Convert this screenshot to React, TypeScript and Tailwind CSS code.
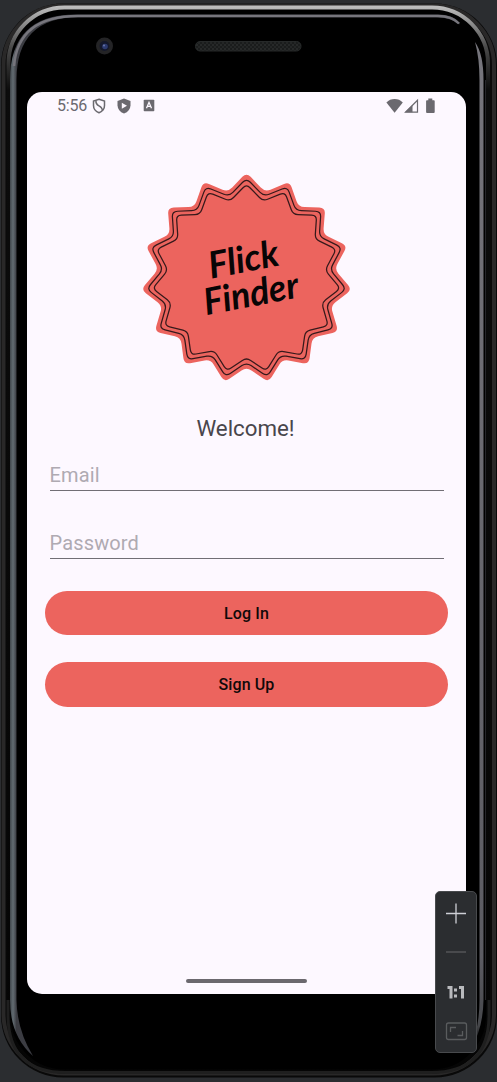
import React from "react";

function burst(tip: number, valley: number, cut: number): string {
  const points: [number, number][] = [];
  for (let i = 0; i < 30; i++) {
    const r = i % 2 === 0 ? tip : valley;
    const a = (i * 12 * Math.PI) / 180;
    points.push([r * Math.sin(a), -r * Math.cos(a)]);
  }
  const toward = (a: [number, number], b: [number, number]) => {
    const d = Math.hypot(b[0] - a[0], b[1] - a[1]);
    return `${(a[0] + ((b[0] - a[0]) * cut) / d).toFixed(2)} ${(a[1] + ((b[1] - a[1]) * cut) / d).toFixed(2)}`;
  };
  return (
    points
      .map((p, i) => {
        const prev = points[(i + 29) % 30];
        const next = points[(i + 1) % 30];
        return `${i === 0 ? "M" : "L"}${toward(p, prev)} Q${p[0].toFixed(2)} ${p[1].toFixed(2)} ${toward(p, next)}`;
      })
      .join(" ") + "Z"
  );
}

function DeviceFrame() {
  return (
    <svg className="absolute inset-0" width="497" height="1082" viewBox="0 0 497 1082" fill="none" aria-hidden="true">
      <defs>
        <linearGradient id="rim" x1="0" y1="4" x2="0" y2="1078" gradientUnits="userSpaceOnUse">
          <stop offset="0" stopColor="#c4c4c4" />
          <stop offset="0.012" stopColor="#a0a0a0" />
          <stop offset="0.04" stopColor="#4a4a4a" />
          <stop offset="0.08" stopColor="#0c0c0c" />
          <stop offset="1" stopColor="#050505" />
        </linearGradient>
        <linearGradient id="glass" x1="0" y1="14" x2="0" y2="1062" gradientUnits="userSpaceOnUse">
          <stop offset="0" stopColor="#77767d" />
          <stop offset="0.9" stopColor="#5c5c63" />
          <stop offset="0.965" stopColor="#45464a" />
          <stop offset="0.985" stopColor="#000" />
        </linearGradient>
        <linearGradient id="leftGlass" x1="9.500" y1="0" x2="16.500" y2="0" gradientUnits="userSpaceOnUse">
          <stop offset="0" stopColor="#3a4045" />
          <stop offset="0.5" stopColor="#626b71" />
          <stop offset="1" stopColor="#3b3c42" />
        </linearGradient>
        <pattern id="mesh" width="4" height="4" patternUnits="userSpaceOnUse">
          <rect width="4" height="4" fill="#1a1c1c" />
          <circle cx="1" cy="1" r="0.8" fill="#363939" />
          <circle cx="3" cy="3" r="0.8" fill="#303333" />
        </pattern>
      </defs>
      <rect x="1" y="3.500" width="496" height="1074" rx="62" fill="#090909" />
      <rect x="3.500" y="5.500" width="490.500" height="1068" rx="60" stroke="#292828" strokeWidth="4" />
      <rect x="8.500" y="7.500" width="479.500" height="1064" rx="56" fill="#000" stroke="url(#rim)" strokeWidth="4" />
      <path d="M8 1000V1015Q8 1072.500 66 1072.500H431Q489 1072.500 489 1015V1000" stroke="#1f1f1f" strokeWidth="3" />
      <path
        d="M10 1000V80Q10 14.500 76 14.500H438Q456 15 460 24.500Q451 17.500 436 17.300H78Q16.500 17.500 16.500 80V1000Q17 1030 33 1056Q10 1036 10 1000Z"
        fill="url(#leftGlass)"
      />
      <path d="M14 66Q18 15.900 78 15.900H438Q452 16 459 23.500" stroke="url(#glass)" strokeWidth="2.500" />
      <path d="M475 42Q483.500 54 483.500 80V1000Q483 1030 470 1050Q479.500 1028 479.500 1000V80Q479.500 58 475 42Z" fill="url(#glass)" />
      <path d="M485.500 80V1000" stroke="#26262a" strokeWidth="1" />
      <circle cx="104.500" cy="46" r="8.500" fill="#242426" />
      <circle cx="104.500" cy="46" r="5" fill="#14182b" />
      <circle cx="105" cy="46.500" r="2.800" fill="#2c3a70" />
      <circle cx="104" cy="45.500" r="1" fill="#6876aa" />
      <rect x="195.500" y="41.500" width="105.500" height="9.500" rx="4.500" fill="url(#mesh)" stroke="#262929" />
    </svg>
  );
}

function StatusBar() {
  return (
    <div className="flex h-[27px] shrink-0 items-center pl-[30px] pr-[31px] text-[#6b696f]">
      <span className="w-[35px] text-[16px] leading-none tracking-[-0.2px]">5:56</span>
      <svg className="mr-[11px]" width="14" height="16" viewBox="0 0 14 16" fill="none" stroke="currentColor" strokeWidth="1.500">
        <path d="M7 1.200 12.500 3V7.500Q12.500 12.500 7 14.800Q1.500 12.500 1.500 7.500V3Z" />
        <path d="M4 2.500Q3.500 6 7 7.800T10.500 13" />
      </svg>
      <svg className="mr-[12px]" width="14" height="16" viewBox="0 0 14 16">
        <path d="M7 .5 13.500 3V7.500Q13.200 13.200 7 15.500Q.8 13.200 .5 7.500V3Z" fill="currentColor" />
        <path d="M4.800 4.800V10.800L10 7.800Z" fill="#fdf8ff" />
      </svg>
      <svg width="12" height="13" viewBox="0 0 12 13">
        <rect x=".7" y=".8" width="10.600" height="11.400" rx=".8" fill="currentColor" />
        <path d="M3.500 9.200 6 3.300 8.500 9.200M4.400 7.400H7.600" fill="none" stroke="#fdf8ff" strokeWidth="1.300" />
      </svg>
      <svg className="ml-auto" width="50" height="16" viewBox="0 0 50 16">
        <path d="M1.400 4.400Q4.800 1 9.600 1T17.800 4.400L9.600 14.700Z" fill="currentColor" />
        <path d="M32.500 2.300V14.200H20.500Z" fill="none" stroke="currentColor" strokeWidth="1.200" />
        <path d="M27.500 7V14.300H20Z" fill="currentColor" />
        <path d="M43.300 .6H47.300V2.200H48.800Q49.700 2.200 49.700 3.100V14Q49.700 15 48.800 15H42Q41.100 15 41.100 14V3.100Q41.100 2.200 42 2.200H43.300Z" fill="currentColor" />
      </svg>
    </div>
  );
}

function Logo() {
  return (
    <svg className="mx-auto mt-[54px] h-[210px] w-[210px] shrink-0" viewBox="-104.500 -105.500 210 210" role="img" aria-label="Flick Finder">
      <path d={burst(106, 88.5, 6)} fill="#ec645e" />
      <path d={burst(100.2, 84, 5.5)} fill="none" stroke="#36191b" strokeWidth="1.250" />
      <path d={burst(94.4, 79.1, 5)} fill="none" stroke="#36191b" strokeWidth="1.250" />
      <g className="font-['Lato'] text-[37px] font-bold italic" fill="#080506" transform="rotate(-11)">
        <text x="-35" y="-6.500" textLength="71" lengthAdjust="spacingAndGlyphs">Flick</text>
        <text x="-46.500" y="28.500" textLength="96" lengthAdjust="spacingAndGlyphs">Finder</text>
      </g>
    </svg>
  );
}

function Field({ label, type }: { label: string; type: string }) {
  return (
    <input
      type={type}
      placeholder={label}
      aria-label={label}
      className="mx-[22.5px] block h-[36px] rounded-none border-b border-[#716e75] bg-transparent pt-[4px] text-[20px] leading-[24px] tracking-[0.15px] text-[#49464c] outline-none placeholder:text-[#afaab2]"
    />
  );
}

function PillButton({ children }: { children: React.ReactNode }) {
  return (
    <button className="ml-[18px] mr-[18px] h-[44.5px] rounded-full bg-[#ec645e] pt-[2px] text-[16px] font-medium tracking-[0.1px] text-[#100909]">
      {children}
    </button>
  );
}

function ZoomPanel() {
  return (
    <aside className="absolute left-[435px] top-[891px] flex h-[162px] w-[42px] flex-col items-center rounded-[5px] border border-[#484a4d] bg-[#2b2d30]">
      <svg width="40" height="160" viewBox="0 0 40 160" fill="none">
        <path d="M10 21.500H30M20 11.500V31.500" stroke="#ced0d6" strokeWidth="1.300" />
        <path d="M10 60H30" stroke="#5a5c5e" strokeWidth="1.300" />
        <path d="M11.500 95.500H15V106.500M23 95.500H26.500V106.500" stroke="#b9babd" strokeWidth="3" />
        <path d="M18 96.500H21V99.500H18ZM18 102.500H21V105.500H18Z" fill="#b9babd" />
        <rect x="10.500" y="131" width="20" height="16.500" rx="2" stroke="#5a5c5e" strokeWidth="1.300" />
        <path d="M14.500 140V135.500H20M21.500 143.500H26.500V139" stroke="#5a5c5e" strokeWidth="1.300" />
      </svg>
    </aside>
  );
}

export default function App() {
  return (
    <div className="relative h-[1082px] w-[497px] overflow-hidden bg-[#2b2d30] font-['Roboto',sans-serif]">
      <DeviceFrame />
      <div className="relative pl-[27px] pt-[92px]">
        <main className="flex h-[902px] w-[439px] flex-col rounded-[15px] bg-[#fdf8ff]">
          <StatusBar />
          <Logo />
          <h1 className="mt-[31px] pr-[2px] text-center text-[22.300px] leading-[28px] text-[#49464c]">Welcome!</h1>
          <div className="mt-[13px] flex flex-col gap-[32px]">
            <Field label="Email" type="email" />
            <Field label="Password" type="password" />
          </div>
          <div className="mt-[31.500px] flex flex-col gap-[27px]">
            <PillButton>Log In</PillButton>
            <PillButton>Sign Up</PillButton>
          </div>
          <div className="mx-auto mb-[11px] mt-auto h-[4px] w-[121px] rounded-full bg-[#6b686e]" />
        </main>
      </div>
      <ZoomPanel />
    </div>
  );
}
